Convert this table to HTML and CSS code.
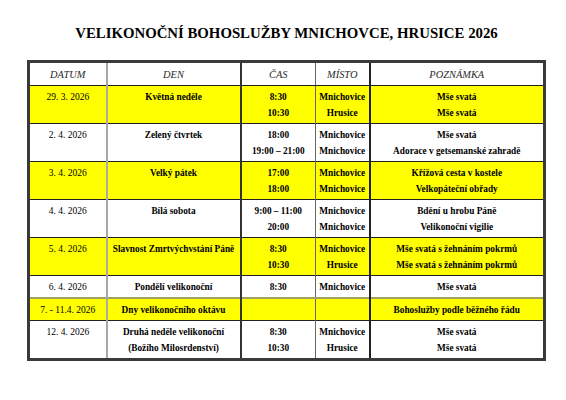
FILE: index.html
```html
<!DOCTYPE html>
<html>
<head>
<meta charset="utf-8">
<link rel="stylesheet" href="styles.css">
</head>
<body>
<h1 class="title">VELIKONOČNÍ BOHOSLUŽBY MNICHOVCE, HRUSICE 2026</h1>
<table class="sched">
  <colgroup>
    <col class="c-date">
    <col class="c-day">
    <col class="c-time">
    <col class="c-place">
    <col class="c-note">
  </colgroup>
  <thead>
    <tr class="head">
      <th class="cd">DATUM</th><th class="cy">DEN</th><th class="ct">ČAS</th><th class="cp">MÍSTO</th><th class="cn">POZNÁMKA</th>
    </tr>
  </thead>
  <tbody>
    <tr class="yel">
      <td class="cd">29. 3. 2026</td><td class="cy">Květná neděle</td>
      <td class="ct">8:30<br>10:30</td><td class="cp">Mnichovice<br>Hrusice</td><td class="cn">Mše svatá<br>Mše svatá</td>
    </tr>
    <tr>
      <td class="cd">2. 4. 2026</td><td class="cy">Zelený čtvrtek</td>
      <td class="ct">18:00<br>19:00 – 21:00</td><td class="cp">Mnichovice<br>Mnichovice</td><td class="cn">Mše svatá<br>Adorace v getsemanské zahradě</td>
    </tr>
    <tr class="yel">
      <td class="cd">3. 4. 2026</td><td class="cy">Velký pátek</td>
      <td class="ct">17:00<br>18:00</td><td class="cp">Mnichovice<br>Mnichovice</td><td class="cn">Křížová cesta v kostele<br>Velkopáteční obřady</td>
    </tr>
    <tr>
      <td class="cd">4. 4. 2026</td><td class="cy">Bílá sobota</td>
      <td class="ct">9:00 – 11:00<br>20:00</td><td class="cp">Mnichovice<br>Mnichovice</td><td class="cn">Bdění u hrobu Páně<br>Velikonoční vigilie</td>
    </tr>
    <tr class="yel">
      <td class="cd">5. 4. 2026</td><td class="cy">Slavnost Zmrtvýchvstání Páně</td>
      <td class="ct">8:30<br>10:30</td><td class="cp">Mnichovice<br>Hrusice</td><td class="cn">Mše svatá s žehnáním pokrmů<br>Mše svatá s žehnáním pokrmů</td>
    </tr>
    <tr class="single">
      <td class="cd">6. 4. 2026</td><td class="cy">Pondělí velikonoční</td>
      <td class="ct">8:30</td><td class="cp">Mnichovice</td><td class="cn">Mše svatá</td>
    </tr>
    <tr class="yel single octave">
      <td class="cd">7. - 11.4. 2026</td><td class="cy">Dny velikonočního oktávu</td>
      <td class="ct"></td><td class="cp"></td><td class="cn">Bohoslužby podle běžného řádu</td>
    </tr>
    <tr class="last">
      <td class="cd">12. 4. 2026</td><td class="cy">Druhá neděle velikonoční<br>(Božího Milosrdenství)</td>
      <td class="ct">8:30<br>10:30</td><td class="cp">Mnichovice<br>Hrusice</td><td class="cn">Mše svatá<br>Mše svatá</td>
    </tr>
  </tbody>
</table>
</body>
</html>
```

FILE: styles.css
```css
html, body {
  margin: 0;
  padding: 0;
  background: #ffffff;
}

body {
  font-family: "Liberation Serif", serif;
  color: #000000;
}

.title {
  margin: 0;
  padding: 22px 0 0 7px;
  font-size: 14.8px;
  line-height: 22px;
  font-weight: bold;
  text-align: center;
}

.sched {
  margin: 16px 0 0 27px;
  width: 519px;
  border-collapse: collapse;
  table-layout: fixed;
  border: 3px solid #3a3a3a;
}

.c-date { width: 78px; }
.c-day { width: 134px; }
.c-time { width: 75px; }
.c-place { width: 54px; }
.c-note { width: auto; }

.sched th,
.sched td {
  text-align: center;
  padding: 3px 1px 2px;
  line-height: 16px;
  vertical-align: top;
  white-space: nowrap;
  overflow: hidden;
}

.sched th {
  font-style: italic;
  font-weight: normal;
  font-size: 10.4px;
  height: 17px;
  vertical-align: middle;
  color: #2a2a2a;
  border-bottom: 1px solid #222222;
}

.sched td {
  font-size: 9.3px;
  font-weight: bold;
  height: 32px;
  border-top: 1px solid #222222;
}

.sched td.cd {
  font-weight: normal;
  font-size: 9.5px;
}

.sched .cd { border-right: 2px solid #a8a8a8; }
.sched .cy { border-right: 2px solid #333333; }
.sched .ct { border-right: 1px solid #666666; }
.sched .cp { border-right: 2px solid #222222; }

.yel td { background: #ffff00; }

.single td { height: 16px; }

.octave td {
  border-top: 2px solid #a0a060;
  height: 15px;
}

.last td { height: 31px; }
```
